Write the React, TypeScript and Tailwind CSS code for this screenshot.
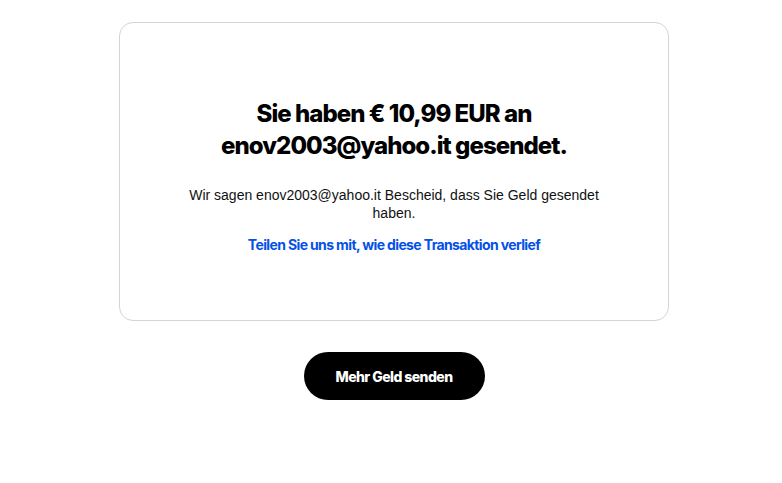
export default function App() {
  return (
    <div className="min-h-screen bg-white pl-[6px] pt-[22px]" style={{ fontFamily: "'Liberation Sans', Arial, sans-serif" }}>
      <div className="mx-auto flex w-[550px] flex-col items-center rounded-[14px] border border-[#d4d4d4] px-10 pb-[65px] pt-[75px] text-center">
        <h1 className="font-['Inter',sans-serif] text-[24px] font-extrabold leading-[32px] tracking-[-0.04em] text-black">
          Sie haben € 10,99 EUR an
          <br />
          enov2003@yahoo.it gesendet.
        </h1>
        <p className="mt-6 w-[420px] text-[14px] leading-[18px] text-[#111]">
          Wir sagen enov2003@yahoo.it Bescheid, dass Sie Geld gesendet haben.
        </p>
        <a
          href="#"
          className="mt-[13px] font-['Inter',sans-serif] text-[14px] font-bold leading-[20px] tracking-[-0.045em] text-[#0551e6]"
        >
          Teilen Sie uns mit, wie diese Transaktion verlief
        </a>
      </div>
      <div className="mt-[31px] flex justify-center">
        <button className="h-12 w-[181px] rounded-full bg-black font-['Inter',sans-serif] text-[14px] font-extrabold tracking-[-0.04em] text-white">
          Mehr Geld senden
        </button>
      </div>
    </div>
  )
}
